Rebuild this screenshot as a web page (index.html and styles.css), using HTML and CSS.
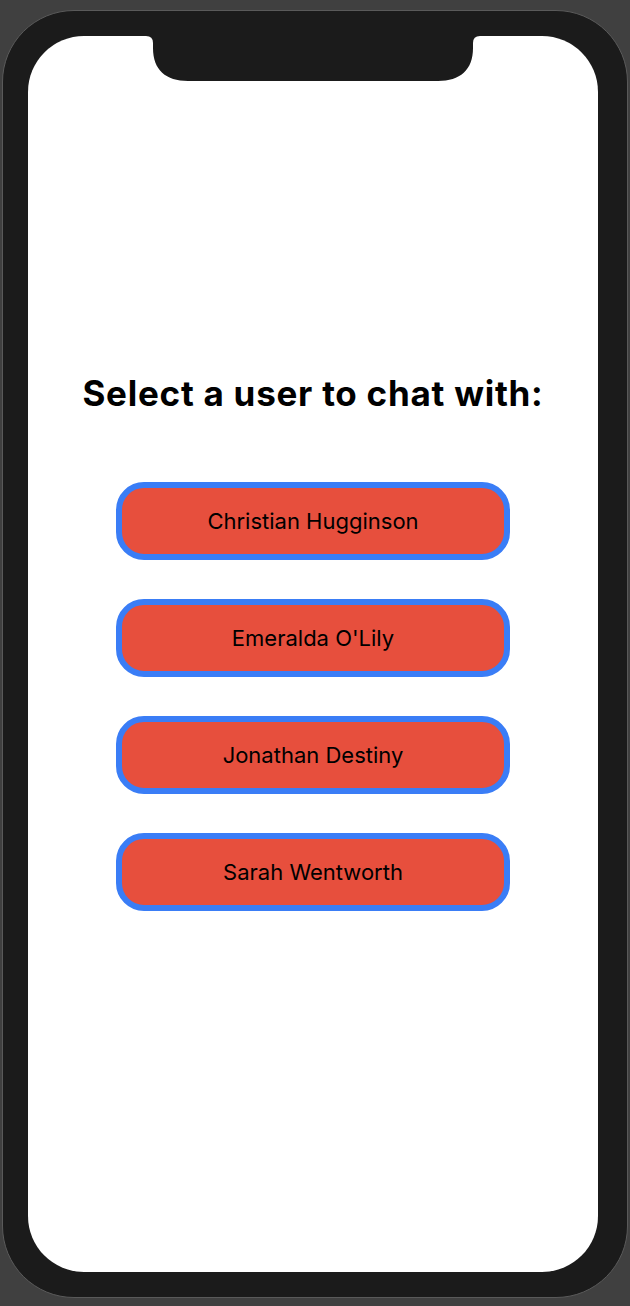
FILE: index.html
```html
<!DOCTYPE html>
<html lang="en">
<head>
<meta charset="utf-8">
<title>Select a user</title>
<link rel="stylesheet" href="styles.css">
</head>
<body>
<div class="phone">
  <div class="screen">
    <svg class="notch" width="334" height="46" viewBox="0 0 334 46" aria-hidden="true">
      <path d="M0 0 H334 Q327 0 327 7 V12 C327 34 314 45 292 45 H42 C20 45 7 34 7 12 V7 Q7 0 0 0 Z" fill="#1b1b1b"/>
    </svg>
    <div class="content">
      <h1 class="title">Select a user to chat with:</h1>
      <div class="users">
        <button class="user">Christian Hugginson</button>
        <button class="user">Emeralda O'Lily</button>
        <button class="user">Jonathan Destiny</button>
        <button class="user">Sarah Wentworth</button>
      </div>
    </div>
  </div>
</div>
</body>
</html>
```
FILE: styles.css
```css
html, body {
  margin: 0;
  padding: 0;
}
body {
  background: #404040;
  width: 630px;
  height: 1306px;
  padding: 10px 2px 0 2px;
  box-sizing: border-box;
  font-family: Inter, "Noto Sans", sans-serif;
}
.phone {
  width: 626px;
  height: 1288px;
  box-sizing: border-box;
  background: #1b1b1b;
  border: 1px solid #5a5a5a;
  border-radius: 72px;
  padding: 25px 29px 25px 25px;
}
.screen {
  position: relative;
  background: #fff;
  height: 100%;
  border-radius: 56px;
  overflow: hidden;
}
.notch {
  position: absolute;
  top: 0;
  left: 118px;
  display: block;
}
.content {
  display: flex;
  flex-direction: column;
  align-items: center;
  padding-top: 337px;
}
.title {
  margin: 0;
  font-size: 35px;
  font-weight: 700;
  color: #000;
  line-height: 40px;
  letter-spacing: 0.75px;
}
.users {
  display: flex;
  flex-direction: column;
  gap: 39px;
  margin-top: 69px;
}
.user {
  width: 394px;
  height: 78px;
  box-sizing: border-box;
  background: #e74f3d;
  border: 6px solid #3a7df6;
  border-radius: 28px;
  font-family: Inter, "Noto Sans", sans-serif;
  font-size: 22px;
  color: #000;
  padding: 0;
}
```
